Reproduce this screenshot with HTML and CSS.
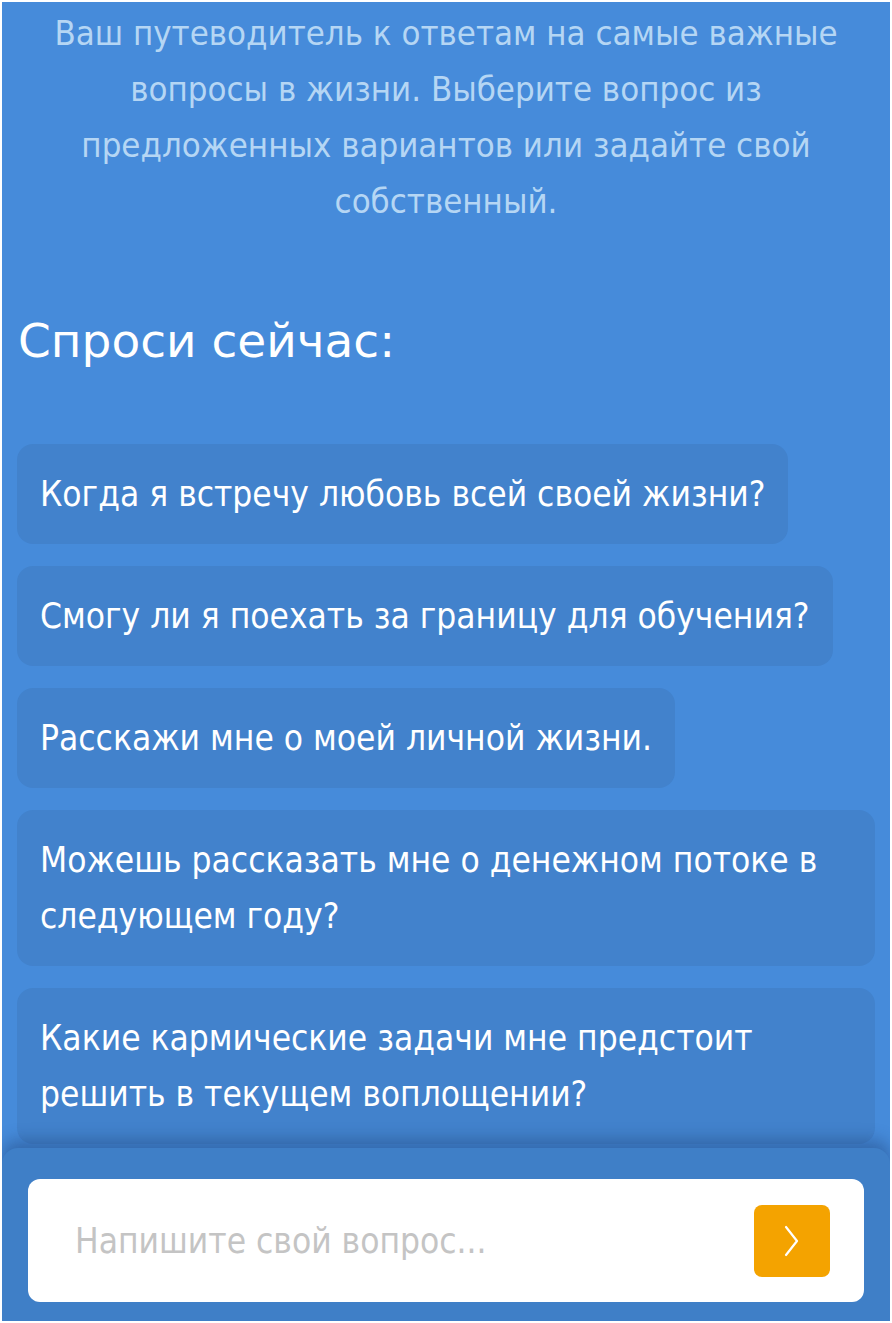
FILE: index.html
```html
<!DOCTYPE html>
<html lang="ru">
<head>
<meta charset="utf-8">
<title>Спроси сейчас</title>
<link rel="stylesheet" href="styles.css">
</head>
<body>
<div class="screen">
  <div class="content">
    <p class="intro">Ваш путеводитель к ответам на самые важные вопросы в жизни. Выберите вопрос из предложенных вариантов или задайте свой собственный.</p>
    <h1 class="title">Спроси сейчас:</h1>
    <div class="questions">
      <div class="question q1">Когда я встречу любовь всей своей жизни?</div>
      <div class="question q2">Смогу ли я поехать за границу для обучения?</div>
      <div class="question q3">Расскажи мне о моей личной жизни.</div>
      <div class="question q4">Можешь рассказать мне о денежном потоке в следующем году?</div>
      <div class="question q5">Какие кармические задачи мне предстоит решить в текущем воплощении?</div>
    </div>
  </div>
  <div class="composer">
    <div class="input-box">
      <span class="placeholder">Напишите свой вопрос...</span>
      <button class="send" type="button" aria-label="Отправить">
        <svg width="22" height="34" viewBox="0 0 22 34" fill="none"><path d="M5 3 L16 17 L5 31" stroke="#ffffff" stroke-width="2.2" stroke-linecap="round" stroke-linejoin="round"/></svg>
      </button>
    </div>
  </div>
</div>
</body>
</html>
```

FILE: styles.css
```css
html, body {
  margin: 0;
  padding: 0;
  background: #ffffff;
}
body {
  padding: 2px;
  box-sizing: border-box;
  height: 1323px;
  font-family: "DejaVu Sans", "Liberation Sans", sans-serif;
}
.screen {
  position: relative;
  height: 1319px;
  background: #468bda;
  overflow: hidden;
}
.content {
  padding: 3px 15px 0 15px;
}
.intro {
  margin: 0 auto;
  width: 800px;
  text-align: center;
  color: #b5d6f4;
  font-size: 34.5px;
  line-height: 56px;
  font-stretch: semi-condensed;
}
.title {
  margin: 84px 0 0 1px;
  color: #ffffff;
  font-weight: normal;
  font-size: 47px;
  line-height: 56px;
}
.questions {
  margin-top: 75px;
  display: flex;
  flex-direction: column;
  align-items: flex-start;
  gap: 22px;
}
.question {
  box-sizing: border-box;
  background: #4282cc;
  color: #ffffff;
  border-radius: 16px;
  padding: 22px 23px;
  font-size: 35px;
  line-height: 56px;
  font-stretch: semi-condensed;
}
.q4, .q5 {
  width: 858px;
}
.composer {
  position: absolute;
  left: 0;
  right: 0;
  bottom: 0;
  height: 173px;
  background: #3f7fc7;
  border-radius: 16px 16px 0 0;
  box-shadow: 0 -8px 16px rgba(25, 55, 105, 0.4);
  padding: 31px 26px 0 26px;
  box-sizing: border-box;
}
.input-box {
  height: 123px;
  background: #ffffff;
  border-radius: 12px;
  display: flex;
  align-items: center;
  justify-content: space-between;
  padding: 0 34px 0 47px;
}
.placeholder {
  color: #c4c4c4;
  font-size: 35px;
  font-stretch: semi-condensed;
}
.send {
  width: 76px;
  height: 72px;
  border: none;
  border-radius: 8px;
  background: #f4a300;
  display: flex;
  align-items: center;
  justify-content: center;
  padding: 0;
}
```
